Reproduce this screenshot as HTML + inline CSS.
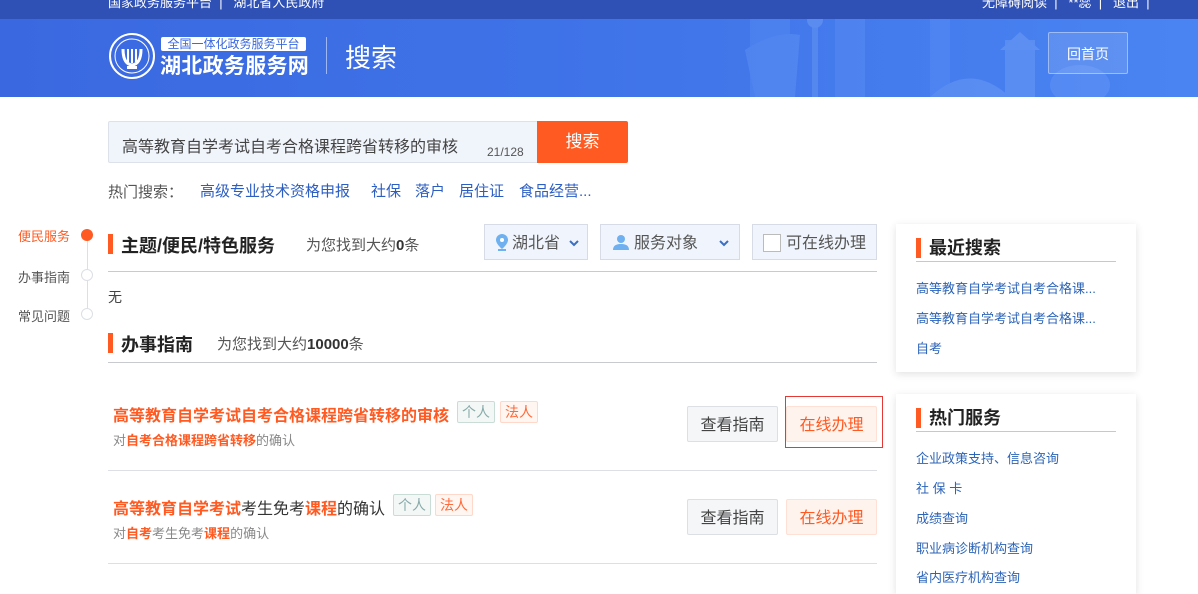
<!DOCTYPE html>
<html><head><meta charset="utf-8"><style>
*{margin:0;padding:0;box-sizing:border-box}
body{width:1198px;height:582px;overflow:hidden;background:#fff;font-family:"Liberation Sans","Noto Sans CJK SC",sans-serif;position:relative;color:#333}
.a{position:absolute;white-space:nowrap}
.hdr{position:absolute;left:0;top:0;width:1198px;height:97px;background:linear-gradient(90deg,#3a68e0 0%,#3f73e8 50%,#4a84f2 100%);overflow:hidden}
.top{position:absolute;left:0;top:0;width:1198px;height:19px;background:#2f50b5}
.o{color:#ff5a22}
.tag{position:absolute;height:22px;border:1px solid;font-size:14px;line-height:20px;padding:0 4px;border-radius:2px}
.t1{color:#8aa;border-color:#c9ddd6;background:#f3f8f6}
.t2{color:#ff6a3a;border-color:#ffd8c9;background:#fff5f1}
.btn{position:absolute;height:36px;font-size:16px;line-height:38px;text-align:center;border:1px solid;border-radius:2px}
.b1{background:#f5f6f8;border-color:#dcdfe4;color:#444;width:91px}
.b2{background:#fff3ee;border-color:#ffe0d4;color:#ff5a22;width:91px}
.card{position:absolute;left:896px;width:240px;background:#fff;box-shadow:0 2px 8px rgba(0,0,0,.12)}
.ch{position:absolute;left:20px;top:14px;width:200px;height:24px;border-bottom:1px solid #c4c8d0;font-size:18px;font-weight:bold;padding-left:13px;line-height:20px;color:#222}
.ch:before{content:"";position:absolute;left:0;top:0;width:5px;height:20px;background:#ff5a22}
.li{position:absolute;left:20px;font-size:13px;color:#2c64b8}
.sec{position:absolute;left:108px;width:769px;border-bottom:1px solid #c8cad0}
.st{position:absolute;left:0;font-size:18px;font-weight:bold;color:#222;padding-left:13px}
.st:before{content:"";position:absolute;left:0;top:2px;width:5px;height:20px;background:#ff5a22}
.filter{position:absolute;top:224px;height:36px;border:1px solid #d6dbe6;background:#f0f5fd;font-size:16px;color:#555;line-height:38px}
.hs{position:absolute;top:180px;font-size:15px;color:#2c5ec2}
</style></head><body>
<div class="hdr">
<svg style="position:absolute;left:700px;top:0" width="480" height="97" viewBox="0 0 480 97" opacity="0.2">
<rect x="50" y="10" width="40" height="87" fill="#6fa0ff"/><rect x="135" y="0" width="30" height="97" fill="#7aa8ff"/><rect x="230" y="0" width="20" height="97" fill="#6fa0ff"/>
<rect x="112" y="20" width="6" height="77" fill="#9cc4ff"/><circle cx="115" cy="20" r="8" fill="#b5d2ff"/>
<path d="M45 50 Q75 30 100 35 L95 97 L55 97Z" fill="#8ab6ff"/>
<path d="M230 97 Q270 60 310 97Z" fill="#a6c8ff"/>
<rect x="305" y="40" width="30" height="57" fill="#a6c8ff"/><path d="M300 50 L320 32 L340 50Z" fill="#b5d2ff"/>
<ellipse cx="380" cy="85" rx="30" ry="20" fill="#8ab6ff"/>
</svg>
<div class="top"></div>
<span class="a" style="left:108px;top:-8px;font-size:13px;color:#fff">国家政务服务平台 &nbsp;| &nbsp; 湖北省人民政府</span>
<span class="a" style="left:982px;top:-8px;font-size:13px;color:#fff">无障碍阅读 &nbsp;| &nbsp; **蕊 &nbsp;| &nbsp; 退出 &nbsp;|</span>
<svg class="a" style="left:108px;top:32px" width="48" height="48" viewBox="0 0 48 48"><circle cx="24" cy="24" r="22" fill="none" stroke="#fff" stroke-width="2"/><circle cx="24" cy="24" r="17" fill="none" stroke="#fff" stroke-width="1"/><path d="M15 17 Q15 32 24 33 Q33 32 33 17" fill="none" stroke="#fff" stroke-width="3"/><path d="M20 17v13M24 17v14M28 17v13" stroke="#fff" stroke-width="2"/><rect x="19" y="34" width="10" height="3" fill="#fff"/></svg>
<div class="a" style="left:161px;top:37px;width:145px;height:14px;background:#fff;border-radius:2px;font-size:12px;line-height:14px;color:#3a68e0;text-align:center">全国一体化政务服务平台</div>
<span class="a" style="left:160px;top:50px;font-size:21px;color:#fff;font-weight:bold;letter-spacing:0.3px">湖北政务服务网</span>
<div class="a" style="left:326px;top:37px;width:1px;height:37px;background:rgba(255,255,255,.5)"></div>
<span class="a" style="left:345px;top:38px;font-size:26px;color:#fff">搜索</span>
<div class="a" style="left:1048px;top:32px;width:80px;height:42px;border:1px solid rgba(255,255,255,.4);background:rgba(255,255,255,.12);border-radius:2px;color:#fff;font-size:14px;text-align:center;line-height:42px">回首页</div>
</div>

<div class="a" style="left:108px;top:121px;width:430px;height:42px;background:#f0f4fb;border:1px solid #dde2ea;border-radius:2px 0 0 2px"></div>
<span class="a" style="left:122px;top:133px;font-size:16px;color:#444">高等教育自学考试自考合格课程跨省转移的审核</span>
<span class="a" style="left:487px;top:145px;font-size:12px;color:#555">21/128</span>
<div class="a" style="left:537px;top:121px;width:91px;height:42px;background:#ff5a22;color:#fff;font-size:17px;text-align:center;line-height:42px;border-radius:0 2px 2px 0">搜索</div>
<span class="a" style="left:108px;top:181px;font-size:15px;color:#555">热门搜索：</span>
<span class="hs a" style="left:200px">高级专业技术资格申报</span>
<span class="hs a" style="left:371px">社保</span>
<span class="hs a" style="left:415px">落户</span>
<span class="hs a" style="left:459px">居住证</span>
<span class="hs a" style="left:519px">食品经营...</span>

<div class="a" style="left:87px;top:235px;width:1px;height:80px;background:#dcdfe4"></div>
<span class="a" style="left:18px;top:226px;font-size:13px;color:#ff5a22">便民服务</span>
<div class="a" style="left:81px;top:229px;width:12px;height:12px;border-radius:50%;background:#ff5a22"></div>
<span class="a" style="left:18px;top:267px;font-size:13px;color:#555">办事指南</span>
<div class="a" style="left:81px;top:269px;width:12px;height:12px;border-radius:50%;background:#fff;border:1px solid #dcdfe4"></div>
<span class="a" style="left:18px;top:306px;font-size:13px;color:#555">常见问题</span>
<div class="a" style="left:81px;top:308px;width:12px;height:12px;border-radius:50%;background:#fff;border:1px solid #dcdfe4"></div>

<div class="sec" style="top:224px;height:48px"></div>
<span class="st a" style="left:108px;top:232px">主题/便民/特色服务</span>
<span class="a" style="left:306px;top:234px;font-size:15px;color:#555">为您找到大约<b style="color:#333">0</b>条</span>
<div class="filter" style="left:484px;width:104px"><svg style="position:absolute;left:11px;top:9px" width="12" height="17" viewBox="0 0 12 17"><path d="M6 0a6 6 0 0 1 6 6c0 4-6 9-6 9S0 10 0 6a6 6 0 0 1 6-6z" fill="#6fb0f0"/><circle cx="6" cy="6" r="2" fill="#fff"/><rect x="2" y="15" width="8" height="2" fill="#6fb0f0"/></svg><span style="position:absolute;left:27px">湖北省</span><svg style="position:absolute;left:84px;top:15px" width="10" height="7"><path d="M1 1l4 4 4-4" stroke="#3d6fc0" stroke-width="2" fill="none"/></svg></div>
<div class="filter" style="left:600px;width:140px"><svg style="position:absolute;left:12px;top:9px" width="16" height="16" viewBox="0 0 16 16"><circle cx="8" cy="5" r="4" fill="#6fb0f0"/><path d="M0 16c0-5 4-6 8-6s8 1 8 6z" fill="#6fb0f0"/></svg><span style="position:absolute;left:33px">服务对象</span><svg style="position:absolute;left:118px;top:15px" width="10" height="7"><path d="M1 1l4 4 4-4" stroke="#3d6fc0" stroke-width="2" fill="none"/></svg></div>
<div class="filter" style="left:752px;width:125px"><div style="position:absolute;left:10px;top:9px;width:18px;height:18px;border:1px solid #bbb;background:#fff"></div><span style="position:absolute;left:33px">可在线办理</span></div>
<span class="a" style="left:108px;top:287px;font-size:14px;color:#444">无</span>

<div class="sec" style="top:330px;height:33px"></div>
<span class="st a" style="left:108px;top:331px">办事指南</span>
<span class="a" style="left:217px;top:333px;font-size:15px;color:#555">为您找到大约<b style="color:#333">10000</b>条</span>

<span class="a" style="left:113px;top:402px;font-size:16px;font-weight:bold;color:#ff5a22">高等教育自学考试自考合格课程跨省转移的审核</span>
<div class="tag t1" style="left:457px;top:401px">个人</div>
<div class="tag t2" style="left:500px;top:401px">法人</div>
<span class="a" style="left:113px;top:430px;font-size:13px;color:#888">对<b class="o">自考合格课程跨省转移</b>的确认</span>
<div class="btn b1" style="left:687px;top:406px">查看指南</div>
<div class="btn b2" style="left:786px;top:406px">在线办理</div>
<div class="a" style="left:785px;top:396px;width:98px;height:52px;border:1px solid #e53935"></div>
<div class="a" style="left:108px;top:470px;width:769px;height:1px;background:#dcdfe6"></div>

<span class="a" style="left:113px;top:495px;font-size:16px;color:#333"><b class="o">高等教育自学考试</b>考生免考<b class="o">课程</b>的确认</span>
<div class="tag t1" style="left:393px;top:494px">个人</div>
<div class="tag t2" style="left:435px;top:494px">法人</div>
<span class="a" style="left:113px;top:523px;font-size:13px;color:#888">对<b class="o">自考</b>考生免考<b class="o">课程</b>的确认</span>
<div class="btn b1" style="left:687px;top:499px">查看指南</div>
<div class="btn b2" style="left:786px;top:499px">在线办理</div>
<div class="a" style="left:108px;top:563px;width:769px;height:1px;background:#dcdfe6"></div>

<div class="card" style="top:224px;height:148px">
<div class="ch">最近搜索</div>
<span class="li a" style="top:54px">高等教育自学考试自考合格课...</span>
<span class="li a" style="top:84px">高等教育自学考试自考合格课...</span>
<span class="li a" style="top:114px">自考</span>
</div>
<div class="card" style="top:394px;height:200px">
<div class="ch">热门服务</div>
<span class="li a" style="top:54px">企业政策支持、信息咨询</span>
<span class="li a" style="top:84px">社 保 卡</span>
<span class="li a" style="top:114px">成绩查询</span>
<span class="li a" style="top:144px">职业病诊断机构查询</span>
<span class="li a" style="top:173px">省内医疗机构查询</span>
</div>
</body></html>
